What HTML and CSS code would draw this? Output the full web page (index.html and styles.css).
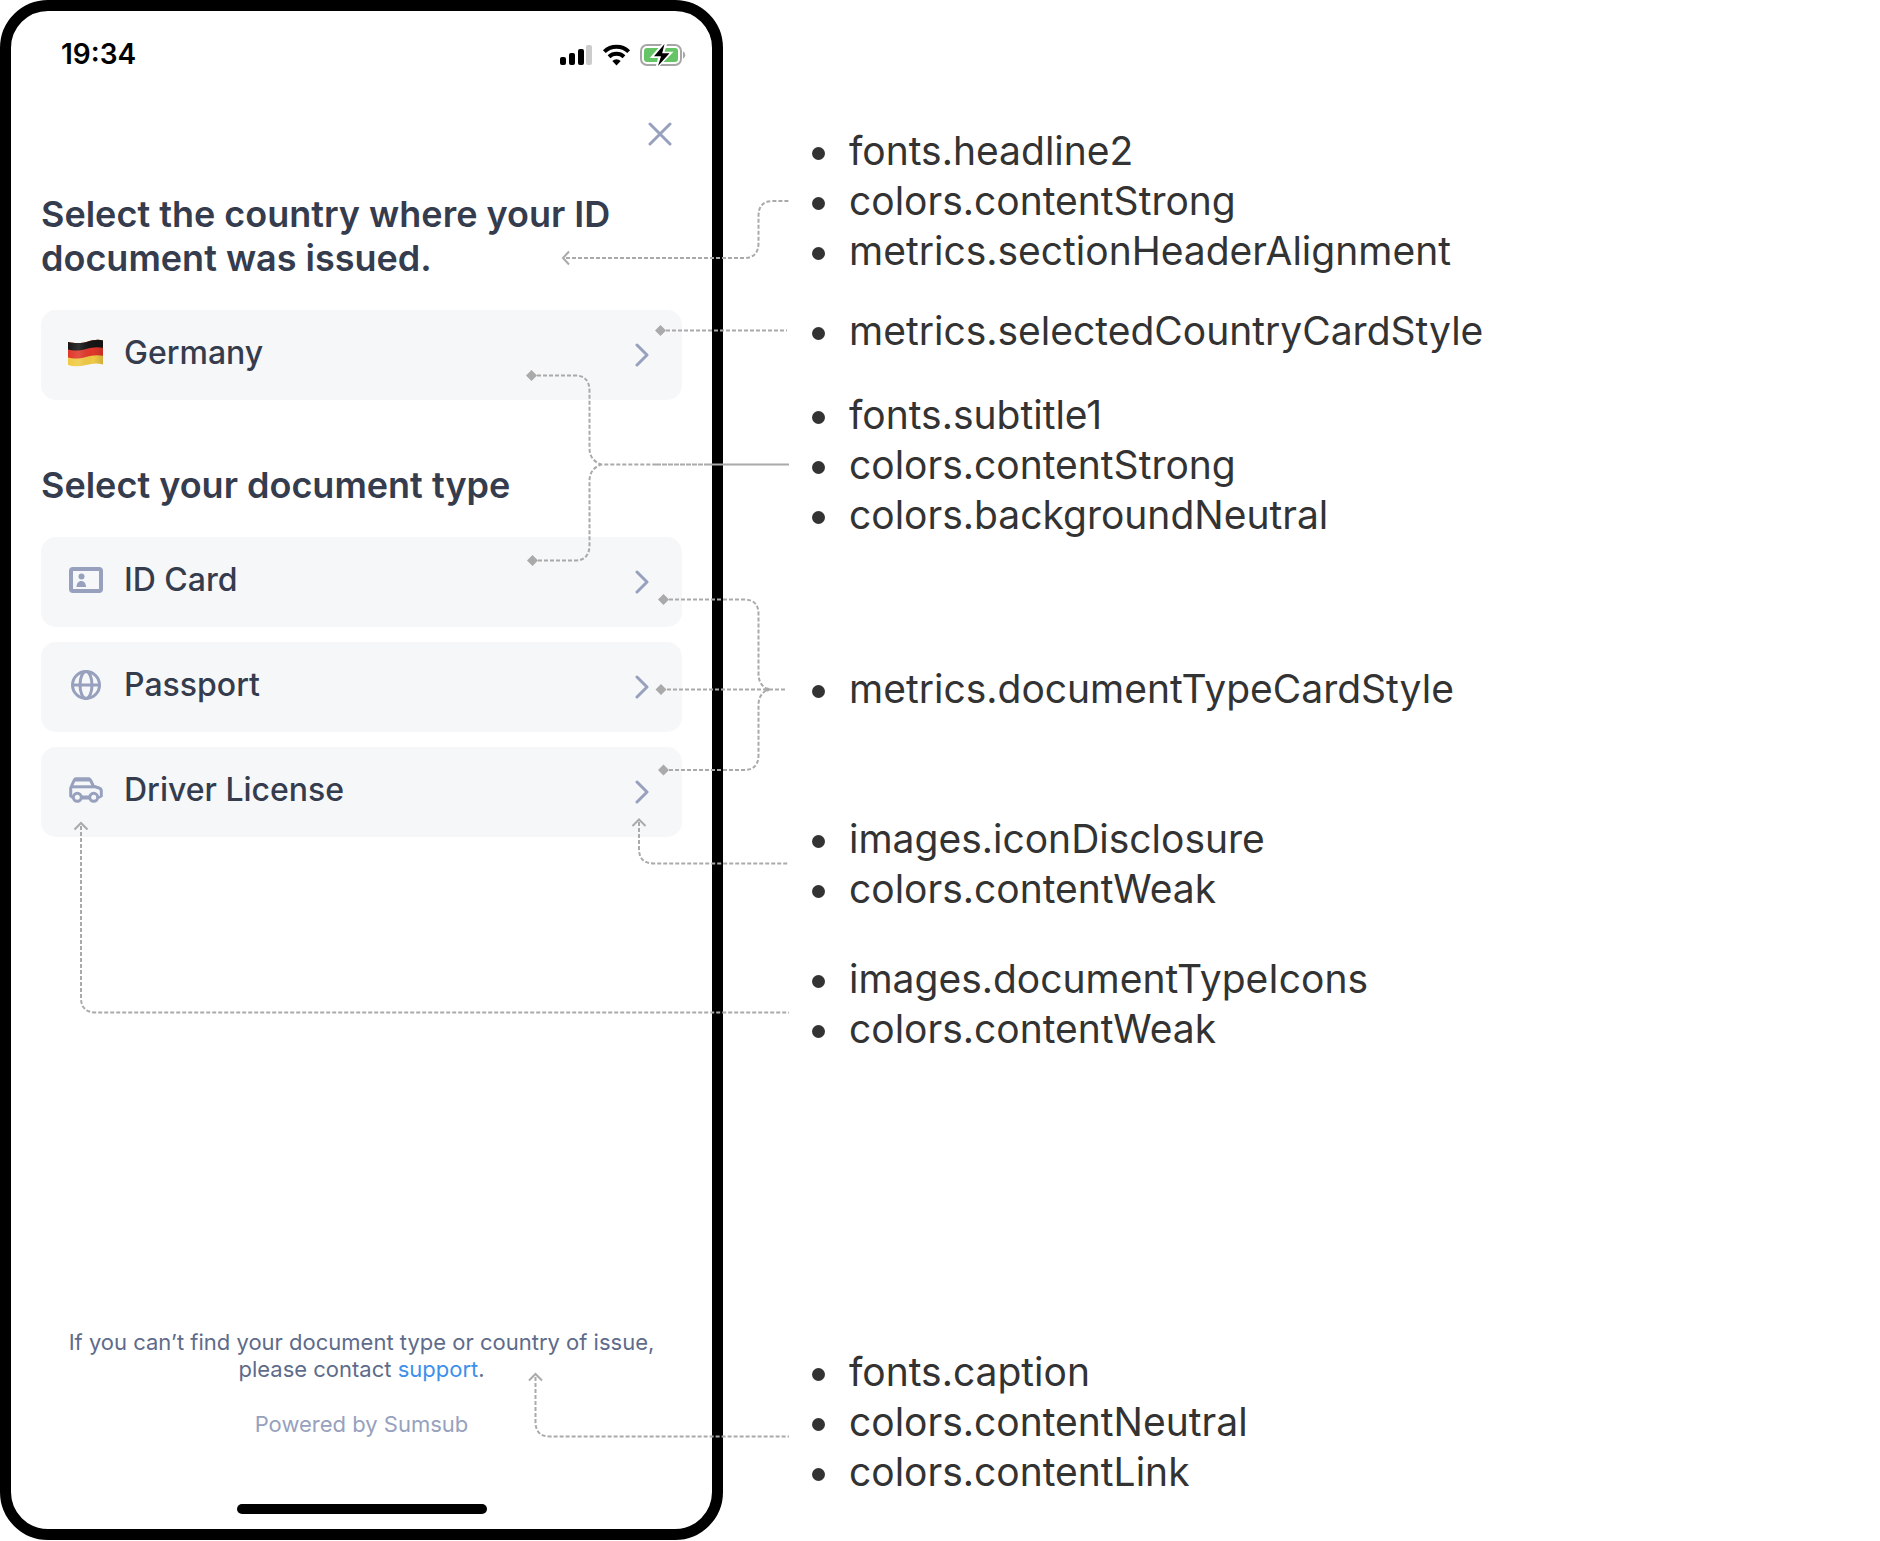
FILE: index.html
```html
<!DOCTYPE html>
<html lang="en">
<head>
<meta charset="utf-8">
<title>Document selection screen: theme keys</title>
<meta name="viewport" content="width=device-width, initial-scale=1">
<link rel="stylesheet" href="styles.css">
</head>
<body>
<main class="diagram">
  <section class="phone" aria-label="Document selection screen">
    <div class="status-bar">
      <span class="clock">19:34</span>
      <div class="status-icons">
        <svg width="33" height="22" viewBox="0 0 33 22" aria-hidden="true">
          <rect x="0" y="13" width="6" height="8" rx="2"/>
          <rect x="9" y="9" width="6" height="12" rx="2"/>
          <rect x="18" y="5" width="6" height="16" rx="2"/>
          <rect x="26" y="1" width="6" height="20" rx="2" fill="#ccc"/>
        </svg>
        <svg width="29" height="22" viewBox="0 0 29 22" aria-hidden="true">
          <path d="M14.500 21.500L10.300 17A6.200 6.200 0 0 1 18.700 17z"/>
          <path d="M7 12.800a11 11 0 0 1 15 0M2.300 7.600a17.800 17.800 0 0 1 24.400 0" fill="none" stroke="#000" stroke-width="4"/>
        </svg>
        <svg width="46" height="22" viewBox="0 0 46 22" aria-hidden="true">
          <rect x="1" y="1" width="40" height="20" rx="6" fill="none" stroke="#a6a6a6" stroke-width="2"/>
          <path d="M43 7.500c3 1.300 3 5.700 0 7z" fill="#a6a6a6"/>
          <rect x="4" y="4" width="34" height="14" rx="3" fill="#64c466"/>
          <path d="M24 0L13 12.500h7L17.500 22 30 9.200h-7.500L25.500 0z" stroke="#fff" stroke-width="3" fill="#fff"/>
          <path d="M24.500 0L14 12.300h7L18 22 29.500 9.200h-7.300z"/>
        </svg>
      </div>
    </div>

    <div class="nav-bar">
      <button class="close" type="button" aria-label="Close">
        <svg width="24" height="24" viewBox="0 0 24 24" aria-hidden="true"><path d="M2 2l20 20M22 2L2 22"/></svg>
      </button>
    </div>

    <div class="content">
      <h1 class="headline">Select the country where your ID document was issued.</h1>
      <button class="card" type="button">
        <span class="card-icon">
          <svg width="36" height="28" viewBox="0 0 36 28" aria-hidden="true">
            <defs>
              <clipPath id="flag"><path d="M0 3C8 5 15 4 20 2.500S30 0 35 1.500V25.500C29 23.500 24 24.500 18 26S6 28 0 26z"/></clipPath>
              <linearGradient id="fold"><stop offset="0" stop-color="#fff" stop-opacity="0"/><stop offset=".3" stop-color="#fff" stop-opacity=".12"/><stop offset=".7" stop-color="#000" stop-opacity="0"/><stop offset="1" stop-color="#000" stop-opacity=".15"/></linearGradient>
            </defs>
            <g clip-path="url(#flag)">
              <rect width="36" height="28" fill="#f0ca45"/>
              <path d="M0-5H36V17C29 15.500 24 16.500 18 18S6 20.500 0 18.500z" fill="#e0382b"/>
              <path d="M0-5H36V9C29 7.500 24 8.500 18 10S6 12.500 0 10.500z" fill="#161616"/>
              <rect width="36" height="28" fill="url(#fold)"/>
            </g>
          </svg>
        </span>
        <span class="card-label">Germany</span>
        <svg class="chevron" width="16" height="24" viewBox="0 0 16 24" aria-hidden="true"><path d="M3 2l10 10L3 22"/></svg>
      </button>

      <h2 class="headline">Select your document type</h2>
      <div class="card-list">
        <button class="card" type="button">
          <span class="card-icon">
            <svg width="34" height="26" viewBox="0 0 34 26" aria-hidden="true">
              <rect x="2" y="2" width="30" height="22" rx="2" fill="none" stroke="#97a1bd" stroke-width="4" stroke-linejoin="round"/>
              <circle cx="12.500" cy="9.500" r="3" fill="#97a1bd"/>
              <path d="M7.500 20c0-8 9.500-8 9.500 0z" fill="#97a1bd"/>
            </svg>
          </span>
          <span class="card-label">ID Card</span>
          <svg class="chevron" width="16" height="24" viewBox="0 0 16 24" aria-hidden="true"><path d="M3 2l10 10L3 22"/></svg>
        </button>
        <button class="card" type="button">
          <span class="card-icon">
            <svg width="30" height="30" viewBox="0 0 30 30" fill="none" stroke="#97a1bd" stroke-width="3" aria-hidden="true">
              <circle cx="15" cy="15" r="13.500"/>
              <ellipse cx="15" cy="15" rx="6" ry="13.500"/>
              <path d="M2 15h26"/>
            </svg>
          </span>
          <span class="card-label">Passport</span>
          <svg class="chevron" width="16" height="24" viewBox="0 0 16 24" aria-hidden="true"><path d="M3 2l10 10L3 22"/></svg>
        </button>
        <button class="card" type="button">
          <span class="card-icon">
            <svg width="34" height="26" viewBox="0 0 34 26" fill="none" stroke="#97a1bd" stroke-width="3" stroke-linejoin="round" aria-hidden="true">
              <path d="M4 20.500L1.700 19V11L5 3.500Q5.600 2 7 2H19.500Q21 2 21.700 3.500L24.500 9.300L30 11Q32.300 11.800 32.300 14V19L29.500 20.500"/>
              <path d="M2 9.800H25"/>
              <path d="M5.500 2.500H21" stroke-width="4"/>
              <path d="M12 20.500H21" stroke-width="4"/>
              <circle cx="8.300" cy="20.300" r="4"/>
              <circle cx="24.700" cy="20.300" r="4"/>
            </svg>
          </span>
          <span class="card-label">Driver License</span>
          <svg class="chevron" width="16" height="24" viewBox="0 0 16 24" aria-hidden="true"><path d="M3 2l10 10L3 22"/></svg>
        </button>
      </div>
    </div>

    <footer class="footer">
      <p class="caption">If you can’t find your document type or country of issue, please contact <a class="link" href="#support">support</a>.</p>
      <p class="powered">Powered by Sumsub</p>
      <div class="home-indicator"></div>
    </footer>
  </section>

  <section class="notes" aria-label="Theme keys">
    <ul class="keys keys-headline"><li>fonts.headline2</li><li>colors.contentStrong</li><li>metrics.sectionHeaderAlignment</li></ul>
    <ul class="keys keys-country"><li>metrics.selectedCountryCardStyle</li></ul>
    <ul class="keys keys-label"><li>fonts.subtitle1</li><li>colors.contentStrong</li><li>colors.backgroundNeutral</li></ul>
    <ul class="keys keys-card"><li>metrics.documentTypeCardStyle</li></ul>
    <ul class="keys keys-disclosure"><li>images.iconDisclosure</li><li>colors.contentWeak</li></ul>
    <ul class="keys keys-icons"><li>images.documentTypeIcons</li><li>colors.contentWeak</li></ul>
    <ul class="keys keys-caption"><li>fonts.caption</li><li>colors.contentNeutral</li><li>colors.contentLink</li></ul>
  </section>

  <svg class="connectors" width="800" height="1540" viewBox="0 0 800 1540" aria-hidden="true">
    <g class="dashed">
      <path d="M566 258H744Q758.500 258 758.500 243V216Q758.500 201 773 201H789"/>
      <path d="M666 330.500H787"/>
      <path d="M537 375.500H575Q589.500 375.500 589.500 391V448Q589.500 460 601 464.500"/>
      <path d="M538 560.500H575Q589.500 560.500 589.500 545V481Q589.500 469 601 464.500H656"/>
      <path d="M669 599.500H744Q758.500 599.500 758.500 614V674Q758.500 685 768 689.500"/>
      <path d="M667 689.500H787"/>
      <path d="M669 770H744Q758.500 770 758.500 755V705Q758.500 694 768 689.500"/>
      <path d="M639 822V849Q639 863.500 654 863.500H789"/>
      <path d="M81 826V998Q81 1012.500 96 1012.500H789"/>
      <path d="M535.500 1377V1422Q535.500 1436.500 550 1436.500H789"/>
    </g>
    <path class="dense" d="M656 464.500H704"/>
    <path class="line" d="M704 464.500H789"/>
    <path class="line" d="M569 251.500L563 258L569 264.500M632.500 826L639 819.500L645.500 826M74.500 829.500L81 823L87.500 829.500M529 1380.500L535.500 1374L542 1380.500"/>
    <path class="diamonds" d="M655 330.500l5.500-5.500 5.500 5.500-5.500 5.500zM526 375.500l5.500-5.500 5.500 5.500-5.500 5.500zM527 560.500l5.500-5.500 5.500 5.500-5.500 5.500zM658 599.500l5.500-5.500 5.500 5.500-5.500 5.500zM655.500 689.500l5.500-5.500 5.500 5.500-5.500 5.500zM658 770l5.500-5.500 5.500 5.500-5.500 5.500z"/>
    <circle class="diamonds" cx="767.500" cy="689.500" r="2"/>
  </svg>
</main>
</body>
</html>
```
FILE: styles.css
```css
* {
  box-sizing: border-box;
}

body,
h1,
h2,
p,
ul {
  margin: 0;
  padding: 0;
}

body {
  background: #fff;
  font-family: Inter, "Liberation Sans", sans-serif;
}

button {
  border: 0;
  background: none;
  font: inherit;
  text-align: left;
  cursor: pointer;
}

svg {
  display: block;
}

.diagram {
  position: relative;
  display: flex;
  align-items: stretch;
}

.phone {
  display: flex;
  flex: 0 0 723px;
  flex-direction: column;
  border: 11px solid #000;
  border-radius: 48px;
}

.status-bar {
  display: flex;
  align-items: center;
  justify-content: space-between;
  padding: 26px 26px 0 50px;
}

.clock {
  font-size: 28px;
  font-weight: 600;
  line-height: 35px;
}

.status-icons {
  display: flex;
  gap: 9px;
}

.nav-bar {
  display: flex;
  justify-content: flex-end;
  padding: 47px 37px 0;
}

.close {
  padding: 3px;
}

.close path,
.chevron path {
  fill: none;
  stroke: #97a1bd;
  stroke-width: 3;
  stroke-linecap: round;
  stroke-linejoin: round;
}

.content {
  padding: 43px 30px 0;
}

.headline {
  margin-bottom: 30px;
  color: #353c4d;
  font-size: 36px;
  font-weight: 600;
  line-height: 44px;
}

.card {
  display: flex;
  align-items: center;
  gap: 19px;
  width: 100%;
  height: 90px;
  padding: 0 32px 0 26px;
  border-radius: 15px;
  background: #f6f7f9;
  color: #353c4d;
}

.card + .headline {
  margin-top: 63px;
}

.card-icon {
  display: flex;
  justify-content: center;
  width: 38px;
  padding-bottom: 4px;
}

.card-label {
  flex: 1;
  padding-bottom: 4px;
  font-size: 32px;
  font-weight: 500;
  line-height: 40px;
}

.card-list {
  display: flex;
  flex-direction: column;
  gap: 15px;
}

.footer {
  margin-top: auto;
  padding: 0 40px 15px;
  font-size: 22px;
  line-height: 27px;
  text-align: center;
}

.caption {
  color: #5e6b8a;
}

.link {
  color: #3d8fea;
  text-decoration: none;
}

.powered {
  margin-top: 28px;
  color: #97a1bd;
}

.home-indicator {
  width: 250px;
  height: 10px;
  margin: 66px auto 0;
  border-radius: 5px;
  background: #000;
}

.notes {
  flex: 1;
  padding: 126px 0 43px 89px;
}

.keys {
  color: #333;
  font-size: 39px;
  line-height: 50px;
  list-style: none;
}

.keys li {
  display: flex;
  align-items: center;
  gap: 24px;
}

.keys li::before {
  width: 13px;
  height: 13px;
  margin-top: 5px;
  border-radius: 50%;
  background: #333;
  content: "";
}

.keys-country {
  margin-top: 30px;
}

.keys-label {
  margin-top: 34px;
}

.keys-card {
  margin-top: 124px;
}

.keys-disclosure {
  margin-top: 100px;
}

.keys-icons {
  margin-top: 40px;
}

.keys-caption {
  margin-top: 293px;
}

.connectors {
  position: absolute;
  top: 0;
  left: 0;
  pointer-events: none;
}

.dashed,
.dense,
.line {
  fill: none;
  stroke: #aaa;
  stroke-width: 2;
}

.dashed {
  stroke-dasharray: 4 2;
}

.dense {
  stroke-dasharray: 5 1;
}

.diamonds {
  fill: #aaa;
}
```
